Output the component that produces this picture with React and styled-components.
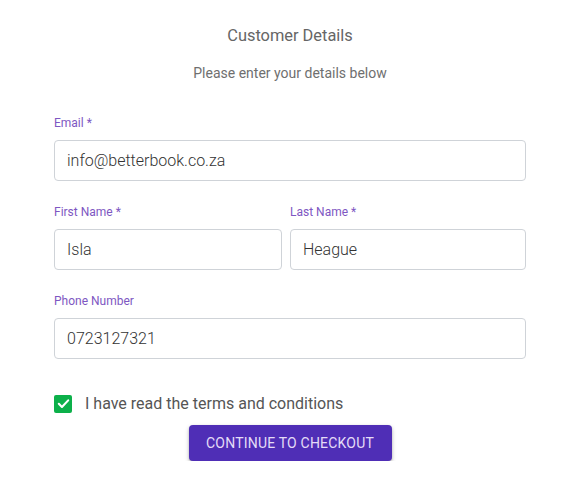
import React, { useState } from "react";
import styled, { createGlobalStyle } from "styled-components";

const Global = createGlobalStyle`
  html, body { margin: 0; padding: 0; background: #fff; }
  body { font-family: Roboto, "Noto Sans", sans-serif; }
  * { box-sizing: border-box; }
`;

const Page = styled.div`
  width: 581px;
  padding: 26px 55px 0 54px;
  display: flex;
  flex-direction: column;
`;

const Title = styled.h2`
  margin: 0;
  text-align: center;
  font-size: 16.4px;
  font-weight: 400;
  line-height: 19px;
  color: #666;
`;

const Subtitle = styled.p`
  margin: 20px 0 0;
  text-align: center;
  font-size: 14px;
  font-weight: 400;
  line-height: 16px;
  color: #6f6f6f;
`;

const Form = styled.form`
  margin-top: 35px;
  display: flex;
  flex-direction: column;
  gap: 24px;
`;

const Row = styled.div`
  display: grid;
  grid-template-columns: ${(p) => p.$cols || "1fr"};
  gap: 8px;
`;

const Field = styled.label`
  display: flex;
  flex-direction: column;
  gap: 10px;
`;

const Label = styled.span`
  font-size: 12px;
  line-height: 14px;
  color: #7e57c2;
`;

const Input = styled.input`
  height: 41px;
  width: 100%;
  border: 1px solid #cfd3d8;
  border-radius: 4px;
  padding: 0 12px;
  font-family: Roboto, sans-serif;
  font-size: 16px;
  font-weight: 300;
  color: #333;
  outline: none;
`;

const CheckRow = styled.label`
  margin-top: 35px;
  display: flex;
  align-items: center;
  gap: 13px;
  font-size: 16px;
  font-weight: 400;
  color: #555;
  line-height: 19px;
`;

const Box = styled.span`
  width: 18px;
  height: 18px;
  border-radius: 2px;
  background: ${(p) => (p.$on ? "#0cb04a" : "#fff")};
  border: ${(p) => (p.$on ? "none" : "2px solid #888")};
  display: flex;
  align-items: center;
  justify-content: center;
`;

const Button = styled.button`
  align-self: center;
  margin-top: 12px;
  width: 203px;
  height: 36px;
  border: none;
  border-radius: 4px;
  background: #4f2eb6;
  color: #e4dcf7;
  font-family: Roboto, sans-serif;
  font-size: 14px;
  font-weight: 400;
  letter-spacing: 0.2px;
  text-transform: uppercase;
  box-shadow: 0 2px 4px rgba(0,0,0,0.25), 0 1px 2px rgba(0,0,0,0.15);
  cursor: pointer;
`;

export default function App() {
  const [agree, setAgree] = useState(true);
  return (
    <>
      <Global />
      <Page>
        <Title>Customer Details</Title>
        <Subtitle>Please enter your details below</Subtitle>
        <Form onSubmit={(e) => e.preventDefault()}>
          <Field>
            <Label>Email *</Label>
            <Input defaultValue="info@betterbook.co.za" />
          </Field>
          <Row $cols="228px 1fr">
            <Field>
              <Label>First Name *</Label>
              <Input defaultValue="Isla" />
            </Field>
            <Field>
              <Label>Last Name *</Label>
              <Input defaultValue="Heague" />
            </Field>
          </Row>
          <Field>
            <Label>Phone Number</Label>
            <Input defaultValue="0723127321" />
          </Field>
        </Form>
        <CheckRow onClick={() => setAgree(!agree)}>
          <Box $on={agree}>
            {agree && (
              <svg width="15" height="15" viewBox="0 0 24 24" fill="none" stroke="#fff" strokeWidth="3.4" strokeLinecap="round" strokeLinejoin="round">
                <path d="M4.5 12.5l5 5 10-10.5" />
              </svg>
            )}
          </Box>
          I have read the terms and conditions
        </CheckRow>
        <Button type="button">Continue to checkout</Button>
      </Page>
    </>
  );
}
